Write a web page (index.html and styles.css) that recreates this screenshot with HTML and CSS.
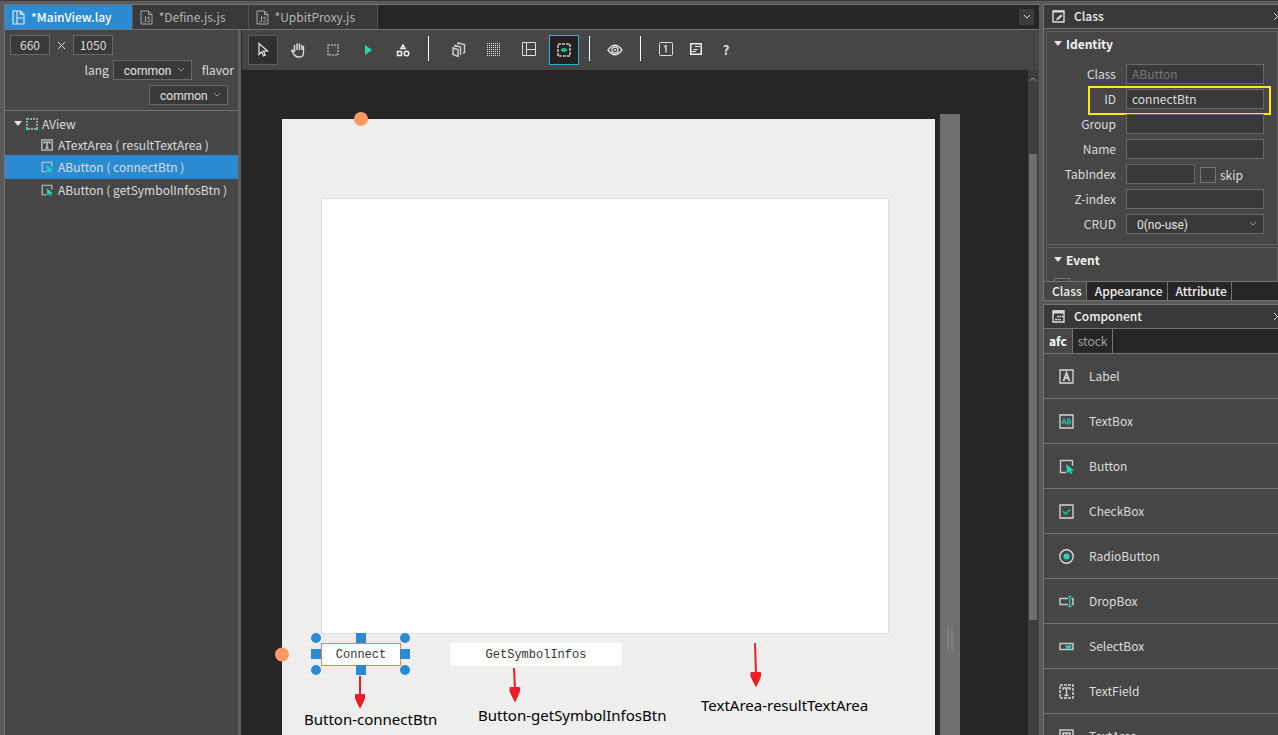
FILE: index.html
```html
<!DOCTYPE html>
<html lang="en">
<head>
<meta charset="utf-8">
<title>MainView.lay</title>
<link rel="stylesheet" href="styles.css">
</head>
<body>
<svg class="defs" aria-hidden="true">
  <symbol id="chev" viewBox="0 0 8 6"><path d="M1 1l3 3 3-3" fill="none" stroke="currentColor"/></symbol>
  <symbol id="tri" viewBox="0 0 8 6"><path d="M0 0h8L4 5z" fill="#e6e6e6"/></symbol>
  <symbol id="close" viewBox="0 0 9 9"><path d="M1 1l7 7M8 1L1 8" stroke="#ddd" fill="none"/></symbol>
  <symbol id="js" viewBox="0 0 13 15"><path d="M1 1h7.500L12 4.500V14H1zM8.500 1v3.500H12" fill="none" stroke="#a8a8a8"/><path d="M5.500 6v5q0 1-1 1H3.500M10 7.500q-2.500-1-2.500.5c0 1.500 2.500.8 2.500 2.500q-.5 2-3 1" fill="none" stroke="#a8a8a8"/></symbol>
  <symbol id="btnicon" viewBox="0 0 15 15"><path d="M7 13.500H1.500v-12h12V7" fill="none" stroke="#c8c8c8" stroke-width="1.400"/><path d="M7 5l8 6.500-3 .4 1.600 2.600-1.700.5-1.500-2.500L8 14.500z" fill="#1fd6bd"/></symbol>
  <symbol id="ticon" viewBox="0 0 15 15"><path d="M1 1h13v13H1z" fill="none" stroke="#c8c8c8" stroke-width="1.600"/><path d="M4 6V4h7v2M7.500 4v7.500M5.500 11.500h4" fill="none" stroke="#d0d0d0" stroke-width="1.600"/></symbol>
</svg>
<div class="topstrip"></div>
<div class="app">
  <main class="workspace">
    <nav class="tabs">
      <button class="tab tab-active"><svg width="13" height="15" viewBox="0 0 13 15"><path d="M1 1h7.500L12 4.500V14H1zM5 1v13M5 8h7M8.500 1v3.500H12" fill="none" stroke="#d5e8f6" stroke-width="1.200"/></svg>*MainView.lay</button>
      <button class="tab"><svg width="13" height="15"><use href="#js"/></svg>*Define.js.js</button>
      <button class="tab"><svg width="13" height="15"><use href="#js"/></svg>*UpbitProxy.js</button>
      <button class="tab-more" aria-label="More tabs"><svg width="8" height="6"><use href="#chev"/></svg></button>
    </nav>
    <div class="body">
      <aside class="outline">
        <div class="setup">
          <div class="size"><input class="num" aria-label="Width" value="660"><svg width="9" height="9"><use href="#close"/></svg><input class="num" aria-label="Height" value="1050"></div>
          <div class="row-lang"><label for="lang">lang</label><span class="sel"><select id="lang"><option>common</option></select><svg width="8" height="6"><use href="#chev"/></svg></span><label class="flavor" for="flavor">flavor</label></div>
          <div class="row-flavor"><span class="sel"><select id="flavor"><option>common</option></select><svg width="8" height="6"><use href="#chev"/></svg></span></div>
        </div>
        <ul class="tree">
          <li class="node root"><svg width="8" height="6"><use href="#tri"/></svg><svg width="12" height="12" viewBox="0 0 12 12"><path d="M1 1h10v10H1z" fill="none" stroke="#bbb" stroke-width="1.500" stroke-dasharray="2 1"/><path d="M0 0h2v2H0zM10 0h2v2h-2zM0 10h2v2H0zM10 10h2v2h-2z" fill="#1fd6bd"/></svg>AView</li>
          <li class="node"><svg width="12" height="12"><use href="#ticon"/></svg>ATextArea ( resultTextArea )</li>
          <li class="node selected"><svg width="12" height="12"><use href="#btnicon"/></svg>AButton ( connectBtn )</li>
          <li class="node"><svg width="12" height="12"><use href="#btnicon"/></svg>AButton ( getSymbolInfosBtn )</li>
        </ul>
      </aside>
      <section class="editor">
        <div class="toolbar">
          <button class="tool pressed" aria-label="Select"><svg width="16" height="16" viewBox="0 0 16 16"><path d="M4 1.500v11l2.700-2.700L8.500 14l1.800-.8-1.800-4L12.500 9z" fill="none" stroke="#ddd" stroke-width="1.300"/></svg></button>
          <button class="tool" aria-label="Pan"><svg width="16" height="16" viewBox="0 0 16 16"><path d="M4.500 10V3M7 8V1.500M9.500 8V1.500M12 8V3" stroke="#ddd" stroke-width="1.500" fill="none"/><path d="M13.500 4v7q0 4-4 4H8q-2 0-3.500-2L1.500 8.500q1.500-1 3 1.500" fill="none" stroke="#ddd" stroke-width="1.300"/></svg></button>
          <button class="tool" aria-label="Area"><svg width="12" height="12" viewBox="0 0 12 12"><path d="M1 1h10v10H1z" fill="none" stroke="#aaa" stroke-width="1.500" stroke-dasharray="2 1"/></svg></button>
          <button class="tool" aria-label="Run"><svg width="8" height="10" viewBox="0 0 8 10"><path d="M1 0l7 5-7 5z" fill="#2bd4b4"/></svg></button>
          <button class="tool" aria-label="Shapes"><svg width="14" height="14" viewBox="0 0 14 14"><path d="M7 2L9 5.500H5zM1.500 8.500h4v4h-4z" fill="none" stroke="#eee" stroke-width="1.500"/><circle cx="10.500" cy="10.500" r="2.300" fill="none" stroke="#eee" stroke-width="1.500"/></svg></button>
          <i class="sep sep-wide"></i>
          <button class="tool" aria-label="Layers"><svg width="14" height="16" viewBox="0 0 14 16"><path d="M1 6l5 1.500v7L1 12.500zM3 5V3.500L8.500 5v8M6 2.500V1l6.500 1.500v8L11 11.500" fill="none" stroke="#ccc" stroke-width="1.500"/></svg></button>
          <button class="tool" aria-label="Grid"><svg width="14" height="14" viewBox="0 0 14 14"><path d="M0 .5h14M0 4.500h14M0 8.500h14M0 12.500h14" stroke="#e6e6e6" stroke-dasharray="1 1"/><path d="M0 2.500h14M0 6.500h14M0 10.500h14" stroke="#e6e6e6" stroke-dasharray="1 1"/></svg></button>
          <button class="tool tool-up" aria-label="Layout"><svg width="14" height="14" viewBox="0 0 14 14"><path d="M.5.5h13v13H.5zM4.500.5v13M4.500 7.500h9" fill="none" stroke="#ddd"/></svg></button>
          <button class="tool active" aria-label="Preview selection"><svg width="14" height="14" viewBox="0 0 14 14"><path d="M1 1h12v12H1z" fill="none" stroke="#ccc" stroke-width="1.500" stroke-dasharray="3 1"/><path d="M3.500 7Q7 3 10.500 7 7 11 3.500 7z" fill="#2bd4a4"/><circle cx="7" cy="7" r="1" fill="#186"/></svg></button>
          <i class="sep"></i>
          <button class="tool" aria-label="Visibility"><svg width="16" height="12" viewBox="0 0 16 12"><path d="M1 6Q8-3.500 15 6 8 15.500 1 6z" fill="none" stroke="#ddd" stroke-width="1.300"/><circle cx="8" cy="6" r="3" fill="none" stroke="#ddd" stroke-width="1.300"/><circle cx="8" cy="6" r="1" fill="#ddd"/></svg></button>
          <i class="sep"></i>
          <span class="group">
            <button class="tool tool-up" aria-label="One"><svg width="14" height="14" viewBox="0 0 14 14"><rect x=".5" y=".5" width="13" height="13" rx="1" fill="none" stroke="#ddd"/><path d="M5 5l2-1.500V10.500" fill="none" stroke="#ddd" stroke-width="1.300"/></svg></button>
            <button class="tool tool-up" aria-label="Source"><svg width="12" height="12" viewBox="0 0 12 12"><path d="M.75.75h10.500v10.500H.75z" fill="none" stroke="#eee" stroke-width="1.500"/><path d="M5 3.500h5M3.500 6.500h4M2 8.500h4" stroke="#eee" fill="none"/></svg></button>
            <button class="tool help">?</button>
          </span>
        </div>
        <div class="stagewrap">
          <div class="stage">
            <div class="page">
              <textarea class="w-result" aria-label="resultTextArea"></textarea>
              <button class="w-connect">Connect</button>
              <button class="w-symbols">GetSymbolInfos</button>
              <svg class="overlay" width="653" height="600">
                <g fill="#ff9966"><circle cx="79" cy="0" r="7"/><circle cx="0" cy="535.500" r="7"/></g>
                <g fill="#2a8bd2"><circle cx="34" cy="519" r="5"/><circle cx="123" cy="519" r="5"/><circle cx="34" cy="551" r="5"/><circle cx="123" cy="551" r="5"/><path d="M74 514h10v10H74zM74 546h10v10H74zM29 530h10v10H29zM118 530h10v10h-10z"/></g>
                <g fill="#ee1c25" stroke="#ee1c25"><path d="M78 557v20" stroke-width="2"/><path d="M73.500 575.500h9v4L78 589l-4.500-9.500z"/><path d="M232 549l1 22" stroke-width="2"/><path d="M228 568.500h9.500v4l-4.500 10-5-10z"/><path d="M473 524l1 32" stroke-width="2"/><path d="M469 553.500h9.500v4l-4.500 10-5-10z"/></g>
              </svg>
              <span class="note note-a">Button-connectBtn</span>
              <span class="note note-b">Button-getSymbolInfosBtn</span>
              <span class="note note-c">TextArea-resultTextArea</span>
            </div>
            <div class="grip"><i></i><i></i></div>
          </div>
          <div class="scroll"><svg width="8" height="6" viewBox="0 0 8 6"><path d="M1 5l3-3 3 3" fill="none" stroke="#999"/></svg><i></i></div>
        </div>
      </section>
    </div>
  </main>
  <aside class="side">
    <section class="props">
      <header class="head"><svg width="13" height="13" viewBox="0 0 13 13"><path d="M1 1h11v11H1z" fill="none" stroke="#ddd" stroke-width="1.400"/><path d="M1 1.500h11" stroke="#ddd" stroke-width="2"/><path d="M4 10.500L5 8l4-3.500L10.500 6 6.500 9.500z" fill="#ddd"/></svg><h2>Class</h2><button aria-label="Close"><svg width="9" height="9"><use href="#close"/></svg></button></header>
      <div class="cards">
        <div class="card">
          <h3><svg width="8" height="6"><use href="#tri"/></svg>Identity</h3>
          <div class="field"><label for="f1">Class</label><input id="f1" value="AButton" disabled></div>
          <div class="field marked"><label for="f2">ID</label><input id="f2" value="connectBtn"></div>
          <div class="field"><label for="f3">Group</label><input id="f3"></div>
          <div class="field"><label for="f4">Name</label><input id="f4"></div>
          <div class="field"><label for="f5">TabIndex</label><input id="f5" class="short"><input type="checkbox" id="skip"><label class="skip" for="skip">skip</label></div>
          <div class="field"><label for="f6">Z-index</label><input id="f6"></div>
          <div class="field"><label for="f7">CRUD</label><span class="sel grow"><select id="f7"><option>0(no-use)</option></select><svg width="8" height="6"><use href="#chev"/></svg></span></div>
        </div>
        <div class="card"><h3><svg width="8" height="6"><use href="#tri"/></svg>Event</h3><input class="ev" type="checkbox" aria-label="Event option"></div>
      </div>
      <nav class="subtabs"><button class="on">Class</button><button>Appearance</button><button>Attribute</button></nav>
    </section>
    <section class="comps">
      <header class="head"><svg width="13" height="13" viewBox="0 0 13 13"><path d="M1 1h11v11H1z" fill="none" stroke="#ddd" stroke-width="1.400"/><path d="M1 2h11" stroke="#ddd" stroke-width="3"/><path d="M5 6.500h6M3 9.500h6" stroke="#ddd" stroke-width="1.500" stroke-dasharray="2 .5"/></svg><h2>Component</h2><button aria-label="Close"><svg width="9" height="9"><use href="#close"/></svg></button></header>
      <nav class="libtabs"><button class="on">afc</button><button>stock</button></nav>
      <ul class="list">
        <li><svg width="15" height="15" viewBox="0 0 15 15"><path d="M1 1h13v13H1z" fill="none" stroke="#d8d8d8" stroke-width="1.300"/><path d="M4.500 12l3-8 3 8M5.500 9h4" fill="none" stroke="#ccc" stroke-width="1.900"/></svg>Label</li>
        <li><svg width="15" height="15" viewBox="0 0 15 15"><path d="M1 1h13v13H1z" fill="none" stroke="#d8d8d8" stroke-width="1.300"/><path d="M3 10l2-5 2 5M3.500 8.500h3M8.500 5h2q1.500 1 0 2.500h-2 2.200q1.500 1.500 0 2.500H8.500z" fill="none" stroke="#1fc6ad" stroke-width="1.200"/></svg>TextBox</li>
        <li><svg width="15" height="15"><use href="#btnicon"/></svg>Button</li>
        <li><svg width="15" height="15" viewBox="0 0 15 15"><path d="M1 1h13v13H1z" fill="none" stroke="#d8d8d8" stroke-width="1.300"/><path d="M4 7.500l2.500 2.500L11 5.500" fill="none" stroke="#1fc6ad" stroke-width="1.500"/></svg>CheckBox</li>
        <li><svg width="15" height="15" viewBox="0 0 15 15"><circle cx="7.500" cy="7.500" r="6.700" fill="none" stroke="#d8d8d8" stroke-width="1.400"/><circle cx="7.500" cy="7.500" r="3" fill="#1fd6bd"/></svg>RadioButton</li>
        <li><svg width="15" height="15" viewBox="0 0 15 15"><path d="M9 4.500H1v6h8M12.500 4.500H14v6h-1.500" fill="none" stroke="#c8c8c8" stroke-width="1.500"/><path d="M9 2.500h3.500M9 12.500h3.500M10.700 2.500v10" stroke="#1fc6ad" stroke-width="1.400"/></svg>DropBox</li>
        <li><svg width="15" height="15" viewBox="0 0 15 15"><path d="M1 4.500h13v6H1z" fill="none" stroke="#c8c8c8" stroke-width="1.500"/><path d="M6 6.500h7L9.500 12z" fill="#1fd6bd"/></svg>SelectBox</li>
        <li><svg width="15" height="15" viewBox="0 0 15 15"><path d="M1 1h13v13H1z" fill="none" stroke="#d8d8d8" stroke-width="1.500" stroke-dasharray="3 1"/><path d="M4 6V4h7v2M7.500 4v7.500M5.500 11.500h4" fill="none" stroke="#d0d0d0" stroke-width="1.400"/></svg>TextField</li>
        <li><svg width="15" height="15"><use href="#ticon"/></svg>TextArea</li>
      </ul>
    </section>
  </aside>
</div>
</body>
</html>
```

FILE: styles.css
```css
*, *::after { box-sizing: border-box; }
body {
  margin: 0;
  height: 100vh;
  display: flex;
  flex-direction: column;
  overflow: hidden;
  background: #5a5a5a;
  color: #dcdcdc;
  font: 12px/20px "Noto Sans CJK KR", sans-serif;
}
button, input, select, textarea { font: inherit; color: inherit; margin: 0; padding: 0; border: 0; background: none; border-radius: 0; }
h2, h3, ul { margin: 0; padding: 0; font-size: 12px; font-weight: 500; list-style: none; }
ul { font-weight: 400; }
svg { flex: none; display: block; }
.defs { position: absolute; width: 0; height: 0; }
.topstrip { flex: none; height: 4px; background: #5a5a5a; border-top: 1px solid #3a3a3a; }
.app { flex: 1; min-height: 0; display: flex; gap: 4px; padding-left: 4px; }
.workspace { flex: 1; min-width: 0; display: flex; flex-direction: column; border: solid #747474; border-width: 1px 0 0 1px; }

.tabs { display: flex; flex: none; height: 25px; background: #262626; border-bottom: 1px solid #747474; }
.tab { display: flex; align-items: center; gap: 6px; padding: 0 22px 0 7px; background: #393939; color: #b4b4b4; border-right: 1px solid #555; }
.tab-active { padding-right: 20px; background: #2a8bd2; color: #fff; font-weight: 500; }
.tab-more { margin: 4px 5px 4px auto; width: 15px; display: grid; place-items: center; background: #3c3c3c; }

.body { flex: 1; min-height: 0; display: flex; padding-right: 1px; background: #464646; }
.outline { flex: none; width: 236px; border-right: 3px solid #606060; }
.setup { display: flex; flex-direction: column; gap: 5px; height: 81px; padding-top: 5px; border-bottom: 1px solid #747474; }
.size { display: flex; align-items: center; gap: 7px; padding-left: 5px; }
.num { width: 40px; height: 20px; text-align: center; background: #393939; border: 1px solid #696969; }
.row-lang, .row-flavor { display: flex; justify-content: flex-end; gap: 4px; padding-right: 4px; }
.row-flavor { padding-right: 10px; }
.flavor { padding-left: 6px; }
.sel { position: relative; width: 79px; height: 20px; color: #e4e4e4; font-family: Roboto, sans-serif; }
.sel select { width: 100%; height: 20px; padding: 0 10px; appearance: none; background: #393939; border: 1px solid #696969; }
.sel svg { position: absolute; right: 7px; top: 7px; color: #999; }
.tree { padding-top: 2px; }
.node { display: flex; align-items: center; gap: 5px; height: 21px; padding-left: 36px; white-space: nowrap; }
.root { padding-left: 9px; gap: 4px; }
.selected { height: 24px; background: #2a8bd2; }

.editor { flex: 1; min-width: 0; display: flex; flex-direction: column; }
.toolbar { flex: none; display: flex; align-items: center; gap: 5px; height: 40px; padding-left: 6px; border-left: 1px solid #262626; }
.tool { display: grid; place-items: center; width: 30px; height: 30px; }
.tool-up { padding-bottom: 2px; }
.pressed { background: #303030; border: 1px solid #5c5c5c; }
.active { background: #222; border: 1px solid #22b8da; }
.help { font-size: 13px; font-weight: 700; }
.sep { width: 1px; height: 25px; margin: 0 5px 3px; background: #fff; }
.sep-wide { margin-right: 10px; }
.group { display: flex; }
.stagewrap { flex: 1; min-height: 0; display: flex; background: #262626; }
.stage { flex: 1; min-width: 0; display: flex; gap: 5px; padding: 44px 68px 0 41px; }
.page { position: relative; flex: 1; margin-top: 5px; background: #eee; color: #000; }
.w-result { position: absolute; left: 39px; top: 79px; width: 568px; height: 436px; resize: none; background: #fff; border: 1px solid #ddd; }
.w-connect, .w-symbols { position: absolute; top: 524px; height: 23px; background: #fff; color: #333; font: 12px/14px "Liberation Mono", monospace; }
.w-connect { left: 39px; width: 80px; border: 1px solid #f5803e; }
.w-symbols { left: 168px; width: 172px; }
.overlay { position: absolute; left: 0; top: 0; overflow: visible; }
.note { position: absolute; white-space: nowrap; font: 15px/20px "Noto Sans", sans-serif; }
.note-a { left: 22px; top: 590px; }
.note-b { left: 196px; top: 586px; }
.note-c { left: 419px; top: 576px; }
.grip { flex: none; width: 20px; display: flex; justify-content: center; align-items: flex-start; gap: 2px; padding-top: 512px; background: #6f6f6f; }
.grip i { width: 2px; height: 25px; background: #7e7e7e; }
.scroll { flex: none; width: 10px; padding: 6px 1px 0; background: #3e3e3e; }
.scroll i { display: block; height: 466px; margin-top: 72px; background: #6e6e6e; }

.side { flex: none; width: 235px; display: flex; flex-direction: column; gap: 3px; }
.props, .comps { display: flex; flex-direction: column; background: #464646; border: solid #747474; border-width: 1px 0 0 1px; }
.props { flex: none; height: 297px; }
.comps { flex: 1; min-height: 0; overflow: hidden; }
.head { flex: none; display: flex; align-items: center; height: 24px; padding-left: 8px; background: #393939; border-bottom: 1px solid #747474; overflow: hidden; color: #f0f0f0; }
.head h2 { flex: 1; padding: 0 0 2px 9px; }
.head button { margin-right: -4px; }
.cards { flex: 1; min-height: 0; overflow: hidden; display: flex; flex-direction: column; gap: 2px; padding: 2px 0 0 2px; }
.card { flex: none; border: 1px solid #606060; padding: 2px 13px 10px 7px; }
.card h3 { display: flex; align-items: center; gap: 4px; height: 20px; margin-bottom: 10px; color: #f4f4f4; font-weight: 700; }
.card .ev { display: block; margin: -2px 0 0; }
.field { position: relative; display: flex; height: 20px; margin-bottom: 5px; }
.field:last-child { margin-bottom: 0; }
.field label { width: 62px; margin-right: 10px; text-align: right; }
.field input { flex: 1; min-width: 0; height: 20px; padding-left: 5px; background: #393939; border: 1px solid #696969; }
.field input:disabled { color: #777; }
.field .short { flex: none; width: 69px; }
.card input[type="checkbox"] { appearance: none; flex: none; width: 16px; height: 16px; border: 1px solid #747474; background: #404040; }
.field input[type="checkbox"] { margin: 3px 4px 0 5px; }
.field .skip { width: auto; margin: 0; padding-top: 1px; }
.marked::after { content: ""; position: absolute; left: 34px; right: -7px; top: -3px; height: 29px; border: 2px solid #ffe90a; pointer-events: none; }
.grow { flex: 1; }
.subtabs, .libtabs { flex: none; display: flex; background: #262626; border: solid #747474; border-width: 1px 0; }
.subtabs { height: 20px; }
.subtabs button, .libtabs button { border-right: 1px solid #747474; }
.subtabs button { padding: 0 4px 0 8px; color: #f0f0f0; font-weight: 500; line-height: 18px; }
.subtabs .on, .libtabs .on { background: #464646; }
.libtabs { height: 25px; border-top: 0; }
.libtabs button { padding: 0 5px; color: #a0a0a0; }
.libtabs .on { color: #fff; font-weight: 700; }
.list li { display: flex; align-items: center; gap: 15px; height: 45px; padding-left: 15px; border-bottom: 1px solid #747474; }
```
